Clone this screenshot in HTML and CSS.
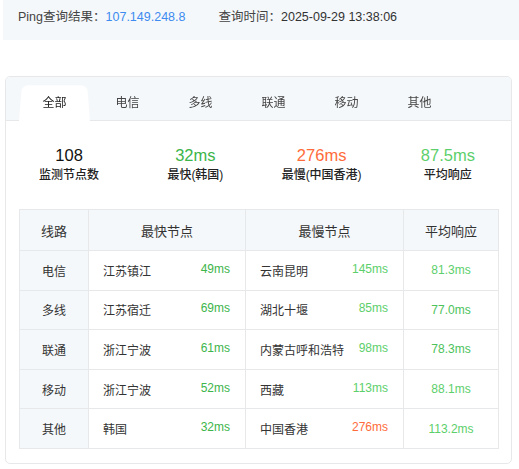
FILE: index.html
```html
<!DOCTYPE html>
<html lang="zh-CN">
<head>
<meta charset="utf-8">
<title>Ping查询结果</title>
<link rel="stylesheet" href="styles.css">
</head>
<body>
<div class="topbar">
  <span class="label">Ping查询结果：</span><span class="ip">107.149.248.8</span>
  <span class="label">查询时间：</span><span class="time">2025-09-29 13:38:06</span>
</div>
<div class="card">
  <div class="tabs">
    <div class="tab active"><span>全部</span></div>
    <div class="tab"><span>电信</span></div>
    <div class="tab"><span>多线</span></div>
    <div class="tab"><span>联通</span></div>
    <div class="tab"><span>移动</span></div>
    <div class="tab"><span>其他</span></div>
  </div>
  <div class="stats">
    <div class="stat"><div class="num">108</div><div class="lbl">监测节点数</div></div>
    <div class="stat"><div class="num g1">32ms</div><div class="lbl">最快(韩国)</div></div>
    <div class="stat"><div class="num or">276ms</div><div class="lbl">最慢(中国香港)</div></div>
    <div class="stat"><div class="num g2">87.5ms</div><div class="lbl">平均响应</div></div>
  </div>
  <div class="tablewrap">
    <table class="tbl">
      <colgroup><col class="c1"><col class="c2"><col class="c3"><col class="c4"></colgroup>
      <thead>
        <tr><th>线路</th><th>最快节点</th><th>最慢节点</th><th>平均响应</th></tr>
      </thead>
      <tbody>
        <tr><td class="line">电信</td><td><div class="node"><span>江苏镇江</span><span class="g1">49ms</span></div></td><td><div class="node"><span>云南昆明</span><span class="g2">145ms</span></div></td><td class="avg g2">81.3ms</td></tr>
        <tr><td class="line">多线</td><td><div class="node"><span>江苏宿迁</span><span class="g1">69ms</span></div></td><td><div class="node"><span>湖北十堰</span><span class="g2">85ms</span></div></td><td class="avg gm">77.0ms</td></tr>
        <tr><td class="line">联通</td><td><div class="node"><span>浙江宁波</span><span class="g1">61ms</span></div></td><td><div class="node"><span>内蒙古呼和浩特</span><span class="g2">98ms</span></div></td><td class="avg gm">78.3ms</td></tr>
        <tr><td class="line">移动</td><td><div class="node"><span>浙江宁波</span><span class="g1">52ms</span></div></td><td><div class="node"><span>西藏</span><span class="g2">113ms</span></div></td><td class="avg g2">88.1ms</td></tr>
        <tr><td class="line">其他</td><td><div class="node"><span>韩国</span><span class="g1">32ms</span></div></td><td><div class="node"><span>中国香港</span><span class="or">276ms</span></div></td><td class="avg g2">113.2ms</td></tr>
      </tbody>
    </table>
  </div>
</div>
</body>
</html>
```

FILE: styles.css
```css
* { box-sizing: border-box; }
body {
  margin: 0;
  background: #fff;
  color: #333;
  font-family: "Liberation Sans", "Noto Sans CJK SC", sans-serif;
  font-size: 12px;
}
.topbar {
  margin-left: 3px;
  height: 40px;
  background: #f5f8fa;
  padding: 10px 0 0 15px;
  line-height: 14px;
  font-size: 12.5px;
  color: #444;
  display: flex;
}
.topbar .ip { color: #3d8bf0; margin-right: 33px; }
.topbar .time { color: #333; }
.card {
  margin: 36px 0 0 5px;
  width: 507px;
  height: 388px;
  border: 1px solid #e6e8ea;
  border-radius: 5px;
  overflow: hidden;
}
.tabs {
  height: 44px;
  background: #f5f8fa;
  border-bottom: 1px solid #e6e8ea;
  display: flex;
  padding: 5px 0 0 12px;
}
.tab {
  width: 73px;
  height: 39px;
  display: flex;
  align-items: center;
  justify-content: center;
  color: #444;
  font-size: 12px;
  position: relative;
}
.tab span { position: relative; z-index: 1; }
.tab.active { color: #222; }
.tab.active::before {
  content: "";
  position: absolute;
  left: 1px; right: 1px; top: 0; bottom: -1px;
  background: #fff;
  border-radius: 7px 7px 0 0;
  transform: perspective(40px) rotateX(5deg);
  transform-origin: bottom;
}
.stats {
  display: grid;
  grid-template-columns: repeat(4, 1fr);
  padding-top: 24px;
  text-align: center;
}
.num {
  font-size: 16.5px;
  line-height: 20px;
  color: #111;
}
.lbl {
  margin-top: 2px;
  font-size: 12px;
  line-height: 16px;
  font-weight: 500;
  color: #222;
}
.g1 { color: #3cb54a; }
.g2 { color: #5ccf6b; }
.gm { color: #4cc25a; }
.or { color: #ff6b3a; }
.tablewrap { padding: 26px 12px 0 13px; }
.tbl {
  width: 479px;
  border-collapse: collapse;
  table-layout: fixed;
}
.c1 { width: 69px; }
.c2 { width: 157px; }
.c3 { width: 158px; }
.c4 { width: 95px; }
.tbl th, .tbl td {
  border: 1px solid #e6e8ea;
  padding: 0;
}
.tbl th {
  height: 41px;
  background: #f5f8fa;
  font-weight: normal;
  font-size: 13px;
  color: #333;
}
.tbl td { height: 39.6px; font-size: 12px; }
.tbl td.line { background: #f5f8fa; text-align: center; color: #333; }
.tbl td.avg { text-align: center; }
.node {
  display: flex;
  justify-content: space-between;
  padding: 0 15px 0 14px;
  color: #333;
}
```
